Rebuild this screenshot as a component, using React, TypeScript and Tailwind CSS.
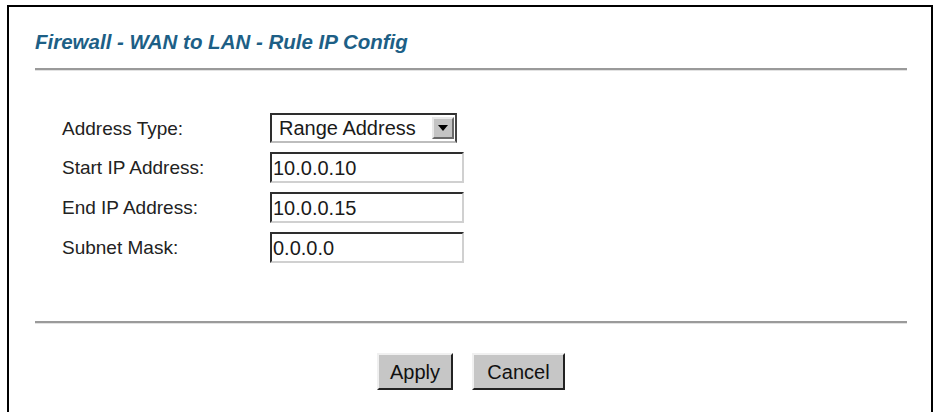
import React from "react";

const font = { fontFamily: '"Liberation Sans", Arial, sans-serif' };

function Field({ value }: { value: string }) {
  return (
    <div className="flex h-[31px] w-[194px] items-center border-2 border-t-[#2e2e2e] border-l-[#2e2e2e] border-r-[#d0d0d0] border-b-[#d0d0d0] bg-white pl-[1px] text-[20px] leading-none text-[#1a1a1a]">
      {value}
    </div>
  );
}

export default function App() {
  const rows: [string, React.ReactNode][] = [
    [
      "Address Type:",
      <div className="flex h-[30px] w-[187px] items-stretch border-2 border-t-[#2e2e2e] border-l-[#2e2e2e] border-r-[#444] border-b-[#bdbdbd] bg-white">
        <div className="flex flex-1 items-center pl-[7px] text-[20px] leading-none text-[#1a1a1a]">
          Range Address
        </div>
        <div className="my-[2px] mr-[1px] flex w-[22px] items-center justify-center border-2 border-t-[#e8e8e8] border-l-[#e8e8e8] border-r-[#6a6a6a] border-b-[#6a6a6a] bg-[#c4c4c4]">
          <svg width="10" height="6" viewBox="0 0 10 6">
            <path d="M0 0 L10 0 L5 6 Z" fill="#000" />
          </svg>
        </div>
      </div>,
    ],
    ["Start IP Address:", <Field value="10.0.0.10" />],
    ["End IP Address:", <Field value="10.0.0.15" />],
    ["Subnet Mask:", <Field value="0.0.0.0" />],
  ];

  return (
    <div className="h-[412px] w-[934px] overflow-hidden bg-white pl-[7px] pt-[5px]" style={font}>
      <div className="h-[420px] w-[926px] border-l-2 border-r-2 border-t-2 border-black pl-[26px] pr-[24px]">
        <div className="pt-[23px] text-[20.5px] font-bold italic leading-[24px] text-[#1d5f86]">
          Firewall - WAN to LAN - Rule IP Config
        </div>
        <div className="mt-[14px] h-[3px] w-[872px] border-t-2 border-[#9a9a9a] border-b border-b-[#e2e2e2]" />
        <div className="flex flex-col gap-[9px] pt-[42px]">
          {rows.map(([label, control], i) => (
            <div key={i} className="flex items-center">
              <div className="w-[235px] pl-[27px] text-[19px] leading-none text-[#222]">{label}</div>
              {control}
            </div>
          ))}
        </div>
        <div className="mt-[58px] h-[3px] w-[872px] border-t-2 border-[#9a9a9a] border-b border-b-[#e2e2e2]" />
        <div className="flex w-[872px] justify-center gap-[19px] pt-[29px]">
          <button className="h-[37px] w-[76px] border-2 border-t-[#f0f0f0] border-l-[#f0f0f0] border-r-[#222] border-b-[#222] bg-[#c6c6c6] text-[20px] leading-none text-[#111]">
            Apply
          </button>
          <button className="h-[37px] w-[93px] border-2 border-t-[#f0f0f0] border-l-[#f0f0f0] border-r-[#222] border-b-[#222] bg-[#c6c6c6] text-[20px] leading-none text-[#111]">
            Cancel
          </button>
        </div>
      </div>
    </div>
  );
}
